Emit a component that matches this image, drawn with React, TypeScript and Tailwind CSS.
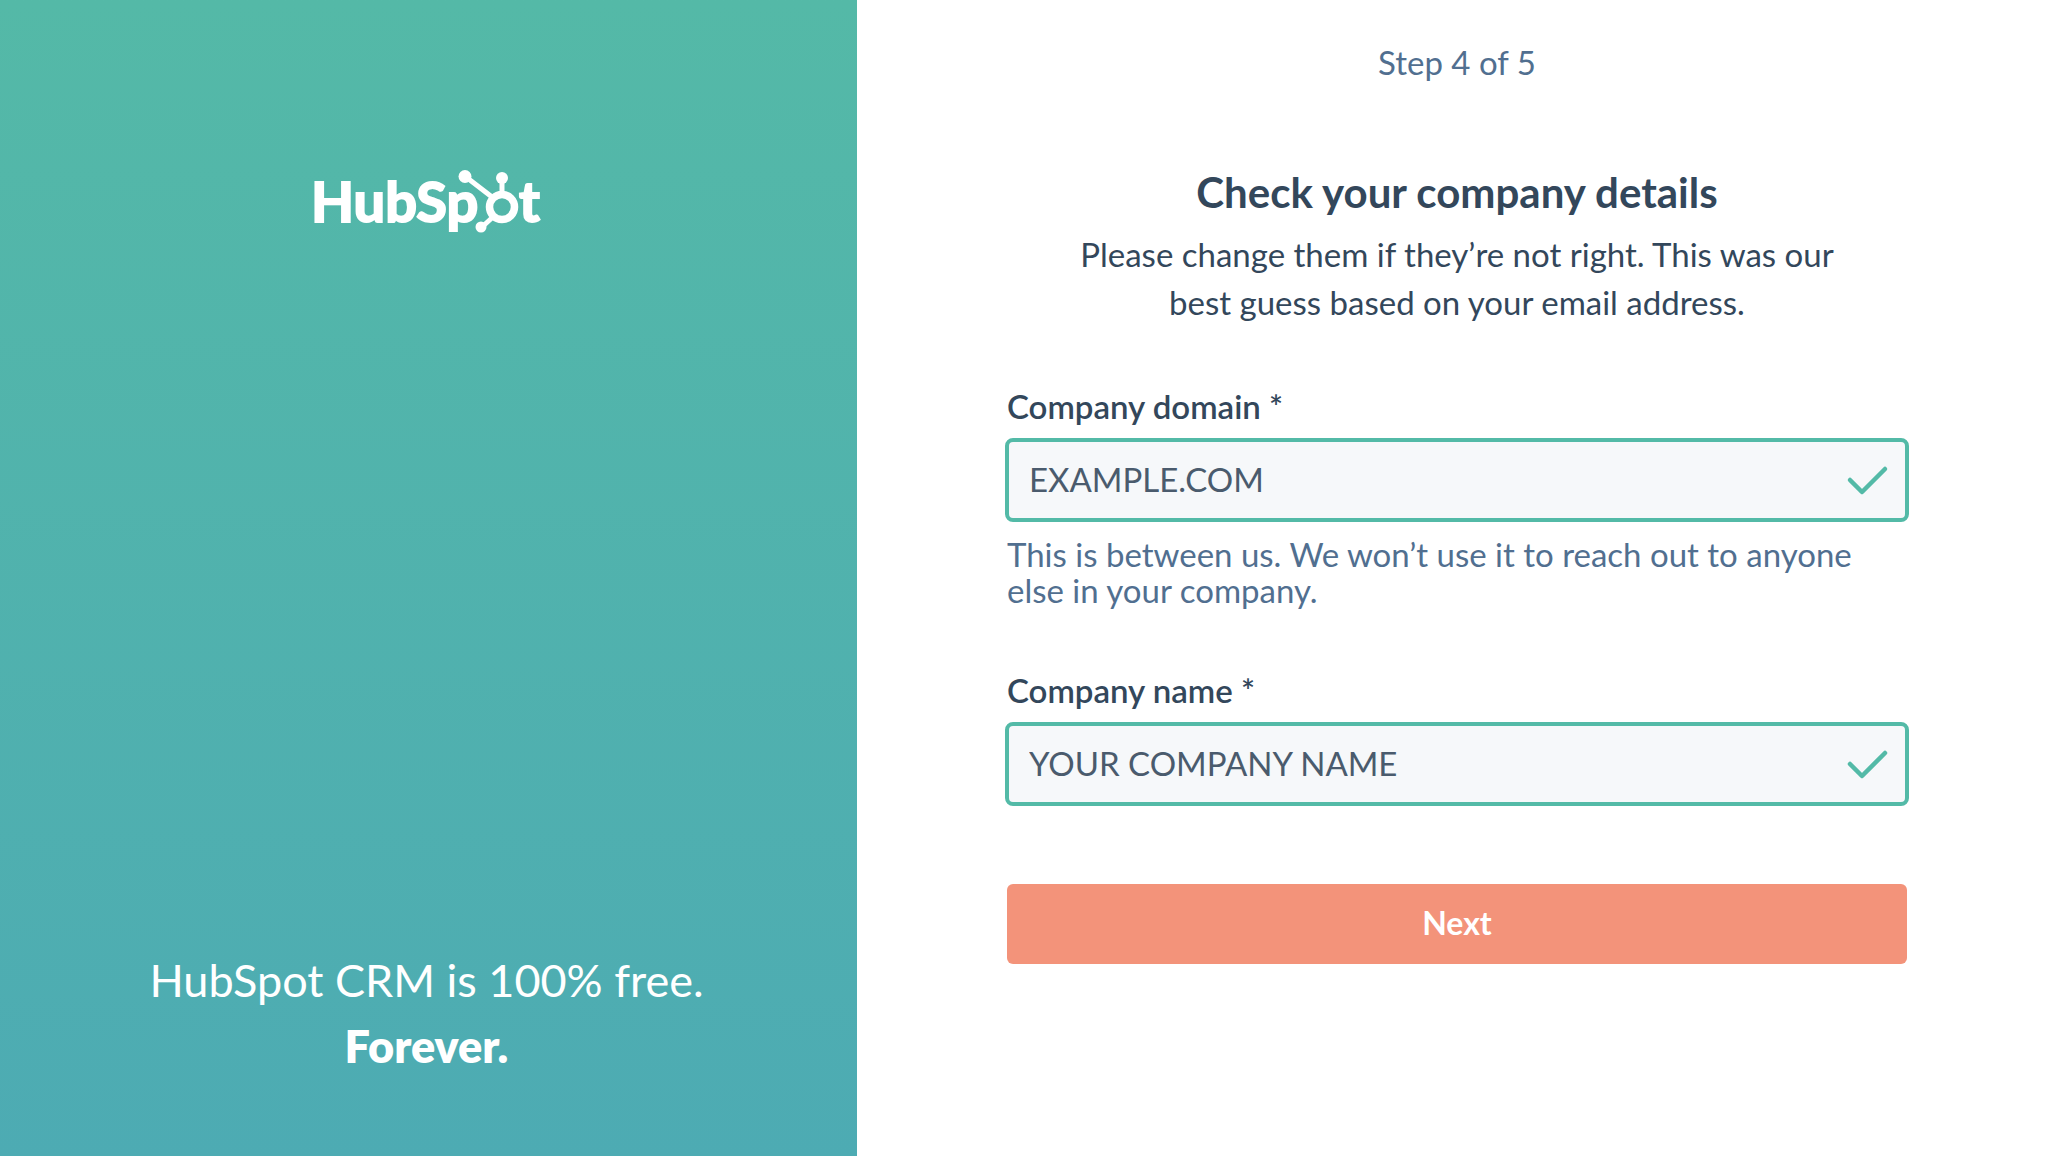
import type { ReactNode } from 'react';

function HubSpotLogo() {
  return (
    <svg className="overflow-visible" width="228" height="68" viewBox="-2 0 228 68" fill="#fff" role="img" aria-label="HubSpot">
      <g fontFamily="Lato, sans-serif" fontWeight="700" fontSize="56" stroke="#fff" strokeWidth="2">
        <text x="-3" y="53">HubSp</text>
        <text x="205" y="53">t</text>
      </g>
      <g fill="none" stroke="#fff">
        <circle cx="188" cy="38" r="12.5" strokeWidth="7.5" />
        <path d="M152 8l26 20M188 10v17M180 47l-12 11" strokeWidth="5" />
      </g>
      <circle cx="151" cy="7.5" r="6.5" />
      <circle cx="188" cy="9" r="6" />
      <circle cx="167" cy="58" r="5.5" />
    </svg>
  );
}

type FieldProps = {
  id: string;
  label: string;
  value: string;
  children?: ReactNode;
};

function Field({ id, label, value, children }: FieldProps) {
  return (
    <div>
      <label htmlFor={id} className="block px-0.5 text-[33px] leading-10 font-semibold">
        {label} *
      </label>
      <div className="relative mt-3">
        <input
          id={id}
          type="text"
          defaultValue={value}
          className="block h-[84px] w-full rounded-lg border-4 border-[#53baa7] bg-[#f6f8fa] pr-20 pb-0.5 pl-5 text-[33px] text-[#4a5b6d] outline-none"
        />
        <svg className="absolute top-5 right-5 size-11" viewBox="0 0 44 44" fill="none" stroke="#53baa7" strokeWidth="4.5" strokeLinecap="round" strokeLinejoin="round">
          <path d="M5 22l12 12l23-23" />
        </svg>
      </div>
      {children}
    </div>
  );
}

export default function App() {
  return (
    <div className="flex min-h-screen font-['Lato',sans-serif] text-[#33475b]">
      <aside className="flex w-[41.62%] flex-col items-center justify-between bg-linear-to-b from-[#54b9a7] to-[#4dabb3] pt-[169px] pr-1 pb-[77px] text-white">
        <HubSpotLogo />
        <p className="text-center text-[45px] leading-[66px]">
          HubSpot CRM is 100% free.
          <br />
          <strong className="font-extrabold">Forever.</strong>
        </p>
      </aside>
      <main className="flex flex-1 flex-col items-center bg-white pt-[38px] pr-[34px] pl-8">
        <p className="text-[33px] leading-12 text-[#516f90]">Step 4 of 5</p>
        <h1 className="mt-20 text-[42px] leading-13 font-bold">Check your company details</h1>
        <p className="mt-3 text-center text-[33px] leading-12">
          Please change them if they’re not right. This was our
          <br />
          best guess based on your email address.
        </p>
        <form className="mt-15 w-full max-w-[904px]" onSubmit={(e) => e.preventDefault()}>
          <Field id="domain" label="Company domain" value="EXAMPLE.COM">
            <p className="mt-3.5 px-0.5 text-[33px] leading-9 text-[#516f90]">
              This is between us. We won’t use it to reach out to anyone
              <br />
              else in your company.
            </p>
          </Field>
          <div className="mt-[62px]">
            <Field id="company" label="Company name" value="YOUR COMPANY NAME" />
          </div>
          <div className="mt-[78px] px-0.5">
            <button type="submit" className="h-20 w-full rounded-md bg-[#f3937a] pb-0.5 text-[32px] font-bold text-white">
              Next
            </button>
          </div>
        </form>
      </main>
    </div>
  );
}
